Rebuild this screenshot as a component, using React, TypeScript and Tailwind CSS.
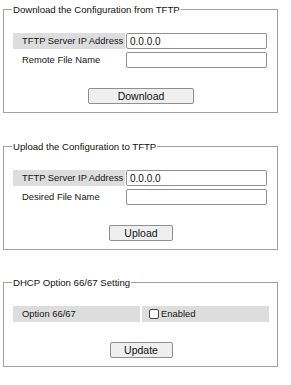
import React from "react";

const Field = ({ label, value, gray }: { label: string; value?: string; gray?: boolean }) => (
  <>
    <div className={`h-[16px] flex items-center pl-[9px] ${gray ? "bg-[#dddddd]" : ""}`}>{label}</div>
    <input
      readOnly
      value={value ?? ""}
      className="h-[16px] w-[141px] border border-[#8f8f8f] rounded-[2px] bg-white px-[3px] text-[10px] text-[#111] outline-none font-['Liberation_Sans',sans-serif]"
    />
  </>
);

const Btn = ({ label, w }: { label: string; w: string }) => (
  <div className="mt-[20px] flex justify-center">
    <button
      className={`${w} h-[16px] border border-[#8f8f8f] rounded-[2px] bg-[#efefef] text-[10.5px] leading-[14px] text-[#111] font-['Liberation_Sans',sans-serif]`}
    >
      {label}
    </button>
  </div>
);

const Box = ({ title, children, mt }: { title: string; children: React.ReactNode; mt?: string }) => (
  <fieldset className={`w-[275px] border border-[#a0a0a0] pl-[9px] pr-[8px] pt-[18px] pb-[8px] ${mt ?? ""}`}>
    <legend className="ml-[-1px] px-[1px] leading-[11px] text-[9.6px] text-[#111]">{title}</legend>
    {children}
  </fieldset>
);

export default function App() {
  return (
    <div className="w-[291px] h-[385px] bg-white pl-[3px] pt-[4px] font-['Liberation_Sans',Arial,sans-serif] text-[9.4px] text-[#141414]">
      <Box title="Download the Configuration from TFTP">
        <div className="grid grid-cols-[112px_1fr] gap-x-[1px] gap-y-[3px]">
          <Field label="TFTP Server IP Address" value="0.0.0.0" gray />
          <Field label="Remote File Name" />
        </div>
        <Btn label="Download" w="w-[106px]" />
      </Box>
      <Box title="Upload the Configuration to TFTP" mt="mt-[28px]">
        <div className="grid grid-cols-[112px_1fr] gap-x-[1px] gap-y-[3px]">
          <Field label="TFTP Server IP Address" value="0.0.0.0" gray />
          <Field label="Desired File Name" />
        </div>
        <Btn label="Upload" w="w-[64px]" />
      </Box>
      <Box title="DHCP Option 66/67 Setting" mt="mt-[27px]">
        <div className="grid grid-cols-[127px_1fr] gap-x-[2px]">
          <div className="h-[16px] flex items-center pl-[9px] bg-[#dddddd]">Option 66/67</div>
          <label className="h-[16px] flex items-center pl-[7px] bg-[#dddddd]">
            <input
              type="checkbox"
              className="appearance-none m-0 w-[10px] h-[10px] border border-[#444] rounded-[2px] bg-white"
            />
            <span className="ml-[2px]">Enabled</span>
          </label>
        </div>
        <Btn label="Update" w="w-[63px]" />
      </Box>
    </div>
  );
}
